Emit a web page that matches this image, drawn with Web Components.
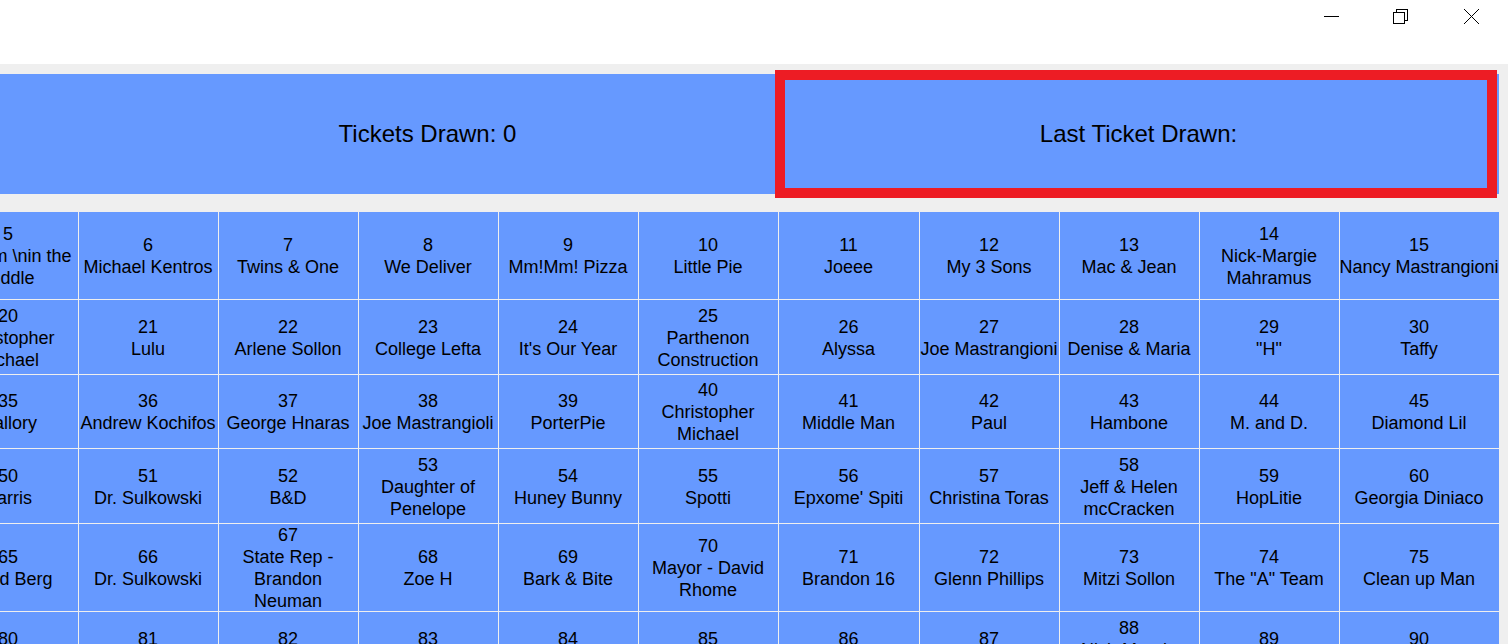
<!DOCTYPE html>
<html lang="en">
<head>
<meta charset="utf-8">
<title>Ticket Drawing</title>
<style>
html, body { margin: 0; height: 100%; }
body { font-family: "Liberation Sans", Arial, sans-serif; color: #000; background: #efefef; overflow: hidden; }
</style>
</head>
<body>
<raffle-app></raffle-app>
<script>
class WindowBar extends HTMLElement {
  constructor() {
    super();
    this.attachShadow({ mode: "open" }).innerHTML = `
      <style>
        :host { display: flex; justify-content: flex-end; align-items: flex-start; height: 64px; padding-right: 2px; box-sizing: border-box; background: #fff; }
        button { width: 70px; height: 32px; padding: 0; border: 0; background: none; display: grid; place-items: center; }
        svg { display: block; width: 16px; height: 16px; fill: none; stroke: #000; }
      </style>
      <button aria-label="Minimize"><svg viewBox="0 0 16 16" shape-rendering="crispEdges"><path d="M1 8.5H16"/></svg></button>
      <button aria-label="Restore"><svg viewBox="0 0 16 16" shape-rendering="crispEdges"><path d="M.5 4.5h11v11H.5zM3.5 4V1.5h11v11H12"/></svg></button>
      <button aria-label="Close"><svg viewBox="0 0 16 16"><path d="M1 1L16 16M16 1L1 16"/></svg></button>`;
  }
}
class StatPanel extends HTMLElement {
  constructor() {
    super();
    this.attachShadow({ mode: "open" }).innerHTML = `
      <style>
        :host { display: grid; place-items: center; position: relative; height: 120px; background: #6699ff; font-size: 24px; line-height: 28px; }
        :host([highlighted])::after { content: ""; position: absolute; inset: -4px 2px -4px -3px; border: 10px solid #ed1c24; }
      </style>
      <span><slot></slot></span>`;
  }
}
const rows = [
  [88, 5, ["Malcom \\nin the Middle", "Michael Kentros", "Twins & One", "We Deliver", "Mm!Mm! Pizza", "Little Pie", "Joeee", "My 3 Sons", "Mac & Jean", "Nick-Margie Mahramus", "Nancy Mastrangioni"]],
  [75, 20, ["Christopher Michael", "Lulu", "Arlene Sollon", "College Lefta", "It's Our Year", "Parthenon Construction", "Alyssa", "Joe Mastrangioni", "Denise & Maria", "\"H\"", "Taffy"]],
  [74, 35, ["Mallory", "Andrew Kochifos", "George Hnaras", "Joe Mastrangioli", "PorterPie", "Christopher Michael", "Middle Man", "Paul", "Hambone", "M. and D.", "Diamond Lil"]],
  [75, 50, ["Harris", "Dr. Sulkowski", "B&D", "Daughter of Penelope", "Huney Bunny", "Spotti", "Epxome' Spiti", "Christina Toras", "Jeff & Helen mcCracken", "HopLitie", "Georgia Diniaco"]],
  [88, 65, ["David Berg", "Dr. Sulkowski", "State Rep - Brandon Neuman", "Zoe H", "Bark & Bite", "Mayor - David Rhome", "Brandon 16", "Glenn Phillips", "Mitzi Sollon", "The \"A\" Team", "Clean up Man"]],
  [75, 80, ["", "", "", "", "", "", "", "", "Nick-Margie Mahramus", "", ""]]
];
class TicketBoard extends HTMLElement {
  constructor() {
    super();
    const root = this.attachShadow({ mode: "open" });
    root.innerHTML = `
      <style>
        :host { display: block; margin-left: -62px; }
        table { width: 100%; table-layout: fixed; border-collapse: separate; border-spacing: 0; font-size: 18px; line-height: 22px; }
        col:nth-child(7) { width: 141px; }
        col:last-child { width: 160px; }
        td { padding: 0; text-align: center; vertical-align: middle; background: #6699ff; box-shadow: inset 1px -1px #efefef; }
        span { display: block; min-height: 22px; }
      </style>
      <table><colgroup>${"<col>".repeat(11)}</colgroup><tbody></tbody></table>`;
    const body = root.querySelector("tbody");
    for (const [height, first, names] of rows) {
      const tr = body.insertRow();
      tr.style.height = height + "px";
      names.forEach((name, i) => {
        const td = tr.insertCell();
        for (const text of [String(first + i), name]) {
          const line = document.createElement("span");
          line.textContent = text;
          td.append(line);
        }
      });
    }
  }
}
class RaffleApp extends HTMLElement {
  constructor() {
    super();
    this.attachShadow({ mode: "open" }).innerHTML = `
      <style>
        :host { display: block; height: 100%; overflow: hidden; }
        main { padding: 10px 9px 0 0; }
        header { display: grid; grid-template-columns: 77px 701fr 721fr; margin-bottom: 18px; }
      </style>
      <window-bar></window-bar>
      <main>
        <header><stat-panel></stat-panel><stat-panel>Tickets Drawn: 0</stat-panel><stat-panel highlighted>Last Ticket Drawn:</stat-panel></header>
        <ticket-board></ticket-board>
      </main>`;
  }
}
customElements.define("window-bar", WindowBar);
customElements.define("stat-panel", StatPanel);
customElements.define("ticket-board", TicketBoard);
customElements.define("raffle-app", RaffleApp);
</script>
</body>
</html>
